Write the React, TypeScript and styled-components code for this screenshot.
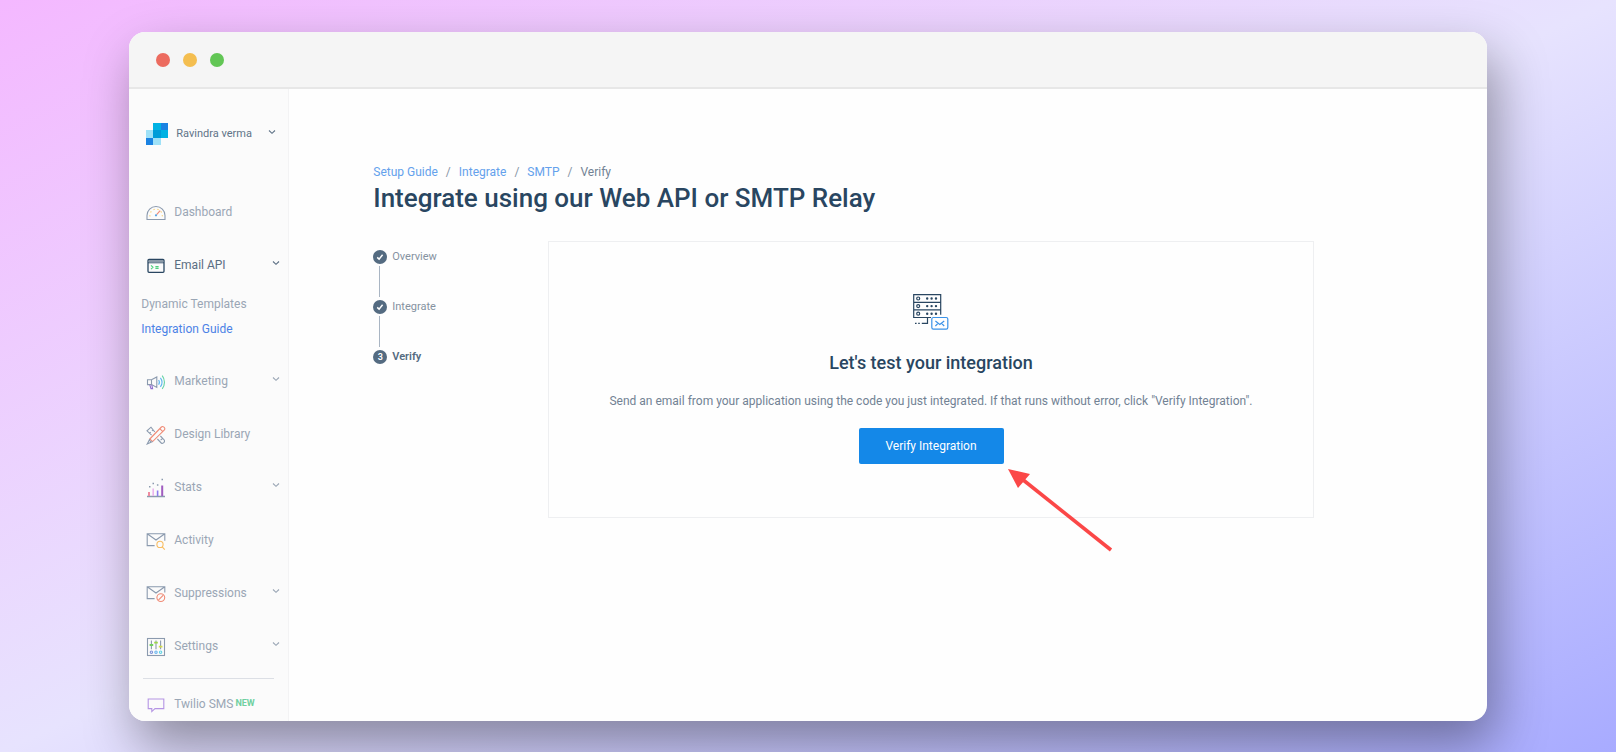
import React from 'react';
import styled, { createGlobalStyle } from 'styled-components';

const GlobalStyle = createGlobalStyle`
  *, *::before, *::after { box-sizing: border-box; }
  body {
    margin: 0;
    font-family: Roboto, "Liberation Sans", sans-serif;
    font-size: 12px;
    line-height: 16px;
    color: #546b81;
  }
  a { text-decoration: none; }
  button { font: inherit; cursor: pointer; }
`;

const Backdrop = styled.div`
  min-height: 100vh;
  padding: 32px 8% 31px;
  background: linear-gradient(to bottom right, #f4b8ff 0%, #e7e3fe 50%, #a8abff 100%);
`;

const BrowserWindow = styled.div`
  display: flex;
  flex-direction: column;
  height: calc(100vh - 63px);
  border-radius: 16px;
  overflow: hidden;
  background: #fefefe;
  box-shadow: 8px 24px 52px rgba(0, 0, 0, 0.38);
`;

const TitleBar = styled.div`
  flex: none;
  display: flex;
  align-items: center;
  gap: 13px;
  height: 57px;
  padding: 0 27px;
  background: #f5f5f5;
  border-bottom: 2px solid #e7e7e7;
`;

const Light = styled.span<{ $color: string }>`
  width: 14px;
  height: 14px;
  border-radius: 50%;
  background: ${(p) => p.$color};
`;

const Body = styled.div`
  flex: 1;
  display: flex;
  min-height: 0;
`;

const Sidebar = styled.aside`
  flex: none;
  width: 160px;
  overflow: hidden;
  background: #fbfbfb;
  border-right: 1px solid #f3f3f4;
`;

const Account = styled.button`
  display: flex;
  align-items: center;
  width: 100%;
  height: 96px;
  padding: 0 12px 6px 17px;
  border: 0;
  background: none;
  color: #607488;
  font-size: 11px;
  text-align: left;
`;

const AccountName = styled.span`
  flex: 1;
  padding-left: 8px;
`;

const NavItem = styled.a<{ $active?: boolean }>`
  display: flex;
  align-items: center;
  width: 100%;
  height: 53px;
  padding: 0 8px 0 17px;
  border: 0;
  background: none;
  color: ${(p) => (p.$active ? '#5a6e82' : '#9aa6b5')};
  text-align: left;
`;

const NavLabel = styled.span`
  flex: 1;
  padding-left: 8px;
`;

const NavIcon = styled.svg`
  flex: none;
  width: 20px;
  height: 20px;
  margin-top: 2px;
  fill: none;
  stroke: #8b9aae;
  stroke-width: 1.1;
`;

const ChevronIcon = styled.svg`
  flex: none;
  width: 8px;
  height: 8px;
  margin-bottom: 4px;
  fill: none;
  stroke: currentColor;
  stroke-width: 1.1;
`;

const SubNav = styled.div`
  display: flex;
  flex-direction: column;
  padding: 1px 0 12px 12px;
`;

const SubLink = styled.a<{ $active?: boolean }>`
  line-height: 25px;
  color: ${(p) => (p.$active ? '#4c82e6' : '#9aa6b5')};
`;

const Divider = styled.hr`
  margin: 6px 14px 0;
  border: 0;
  border-top: 1px solid #dcdfe5;
`;

const ProductLinks = styled.div`
  display: flex;
  flex-direction: column;
  margin-top: -2px;
`;

const NewTag = styled.span`
  padding-left: 2px;
  font-size: 9px;
  font-weight: 700;
  line-height: 12px;
  vertical-align: 2px;
  color: #6fd0a0;
`;

const Main = styled.main`
  flex: 1;
  min-width: 0;
  padding: 75px 173px 0 84px;
`;

const Breadcrumb = styled.nav`
  display: flex;
  gap: 8px;
  color: #8795a5;
`;

const Crumb = styled.a`
  color: #64a1ec;
`;

const Current = styled.span`
  color: #728294;
`;

const Title = styled.h1`
  margin: 0;
  font-size: 26px;
  line-height: 36px;
  font-weight: 500;
  color: #294661;
`;

const Columns = styled.div`
  display: flex;
  align-items: flex-start;
  margin-top: 25px;
`;

const Steps = styled.ol`
  flex: none;
  width: 175px;
  margin: 0;
  padding: 8px 0 0;
  list-style: none;
`;

const Step = styled.li<{ $current?: boolean }>`
  display: flex;
  align-items: center;
  gap: 5px;
  font-size: 11px;
  line-height: 16px;
  font-weight: ${(p) => (p.$current ? 600 : 400)};
  color: ${(p) => (p.$current ? '#546b81' : '#8592a1')};

  &:not(:last-child) {
    flex-wrap: wrap;
  }
  &:not(:last-child)::after {
    content: '';
    flex: 0 0 1px;
    height: 31px;
    margin: -4px 150px 2px 6px;
    background: #a9b5c3;
  }
`;

const StepMark = styled.span`
  display: flex;
  align-items: center;
  justify-content: center;
  width: 14px;
  height: 14px;
  border-radius: 50%;
  background: #546b81;
  color: #ffffff;
  font-size: 9px;
  line-height: 14px;
`;

const Card = styled.section`
  flex: 1;
  display: flex;
  flex-direction: column;
  align-items: center;
  padding: 52px 40px 53px;
  border: 1px solid #eeeff1;
`;

const CardTitle = styled.h2`
  margin: 21px 0 0;
  font-size: 18px;
  line-height: 24px;
  font-weight: 500;
  color: #294661;
`;

const CardText = styled.p`
  margin: 18px 0 19px;
  text-align: center;
  color: #728294;
`;

const ButtonWrap = styled.div`
  position: relative;
`;

const PrimaryButton = styled.button`
  width: 145px;
  height: 36px;
  padding: 0;
  border: 0;
  border-radius: 2px;
  background: #1488e8;
  color: #ffffff;
`;

const Arrow = styled.svg`
  position: absolute;
  left: 100%;
  top: 100%;
  width: 110px;
  height: 90px;
`;

const Chevron = () => (
  <ChevronIcon viewBox="0 0 8 8" aria-hidden="true">
    <path d="M1 2.5 4 5.3 7 2.5" />
  </ChevronIcon>
);

const Logo = () => (
  <svg width="22" height="22" viewBox="0 0 21 21" aria-hidden="true" shapeRendering="crispEdges">
    <path fill="#9fe1f7" d="M0 7h7v7H0zM7 14h7v7H7z" />
    <path fill="#1a82e2" d="M0 14h7v7H0zM14 0h7v7h-7z" />
    <path fill="#00b2e3" d="M7 0h7v7H7zM14 7h7v7h-7z" />
    <path fill="#009dd9" d="M7 7h7v7H7z" />
  </svg>
);

const icons: Record<string, React.ReactNode> = {
  dashboard: (
    <>
      <path d="M1 16.5V12.5a9 9 0 0 1 18 0v4z" />
      <path stroke="#f8d37c" strokeDasharray="1.4 2.6" d="M4 13.5a6.2 6.2 0 1 1 12.2 0" />
      <path stroke="#f08b76" d="M10.6 11.6 14.2 7.6" />
      <circle cx="10" cy="12.3" r=".6" stroke="#5ba8e8" />
    </>
  ),
  email: (
    <>
      <rect x="2" y="3.5" width="16" height="12.8" rx="1" stroke="#294661" strokeWidth="1.3" />
      <path stroke="#294661" strokeWidth=".9" d="M2 6.8h16M3 5.1h14" />
      <path stroke="#4fd07c" d="m5 9.4 2 1.9-2 1.9M9.4 10.6h3.2M9.4 12.4h3.2" />
    </>
  ),
  marketing: (
    <>
      <path d="M1.5 7.8h4L10.8 5v10.4L5.5 12.6h-4zM5.5 7.8v4.8" />
      <path stroke="#8f6fd0" d="M3.8 12.8 5 16.6h1.6l-.8-3.8" />
      <path stroke="#5fb7ef" d="M12.6 8c1 1.4 1 3.4 0 4.8M14.4 5.8c2 2.6 2 6.4 0 9" />
      <path stroke="#63d2a4" d="M16.2 3.6c3 3.8 3 9.4 0 13.2" />
    </>
  ),
  design: (
    <>
      <path d="M8.8 7 5 2.2 1 5.8l4.6 4.4M3.6 8.2l1.2-1M5.9 5.8l1.2-1M11.4 14l4 4.2c2 .6 3.6-1 3-3L14.4 11M14.6 15.2l1.8-1.6" />
      <path stroke="#f08b76" d="m3.8 14 11.6-12c1.4-1.4 4.4 1 3 2.8L6.6 16.6zM13.8 3.7l3 2.9" />
      <path d="M3.8 14 1.2 19l5.4-2.4M3.6 15.4l1.4 1.4" />
    </>
  ),
  stats: (
    <>
      <path strokeWidth="1.5" d="M1 18.5h18" />
      <path stroke="#f08ba0" strokeWidth="2" d="M3 14v4" />
      <path stroke="#ebb4ee" strokeWidth="1.6" d="M7.2 10.5V18" />
      <path stroke="#8d7bf0" strokeWidth="1.6" d="M11.6 12.5V18" />
      <path stroke="#a05cc0" strokeWidth="2" d="M16.2 7.5V18" />
      <path strokeWidth="1.5" d="M3 8.8h1.5M6.5 5.4H8M10.9 7h1.5M15.5 1.6H17" />
    </>
  ),
  activity: (
    <>
      <path d="M8.6 14.6H1.2V2.8h17.6v7M1.2 2.8 10 9l8.8-6.2" />
      <circle cx="14" cy="13.4" r="3.1" stroke="#f8bd62" />
      <path stroke="#f8bd62" d="m16.2 15.8 2.6 2.8" />
    </>
  ),
  suppressions: (
    <>
      <path d="M8.6 14.6H1.2V2.8h17.6v5.6M1.2 2.8 10 9l8.8-6.2" />
      <circle cx="14.8" cy="13.6" r="3.9" stroke="#f08b76" />
      <path stroke="#f08b76" d="m12.4 16.2 4.9-5" />
    </>
  ),
  settings: (
    <>
      <rect x="1.5" y="1.5" width="17" height="17" />
      <path d="M5.4 3.4v8.8M10 3.4v8.8M14.6 3.4v8.8" />
      <path stroke="#71cf5c" strokeWidth="1.8" d="M3.6 8h3.6" />
      <path stroke="#9bd648" strokeWidth="1.8" d="M8.2 5.6h3.6" />
      <path stroke="#d3dc4a" strokeWidth="1.8" d="M12.8 9.6h3.6" />
      <circle cx="5.4" cy="15.2" r="1.2" stroke="#7f93d8" />
      <circle cx="10" cy="15.2" r="1.2" stroke="#68b4ee" />
      <circle cx="14.6" cy="15.2" r="1.2" stroke="#62d3e4" />
    </>
  ),
  sms: <path stroke="#b595e4" d="M2.2 4h15.6v9.6H9l-3.2 3v-3H2.2z" />,
};

interface ItemProps {
  icon: string;
  label: string;
  menu?: boolean;
  active?: boolean;
  tag?: string;
}

const Item = ({ icon, label, menu, active, tag }: ItemProps) => {
  const content = (
    <>
      <NavIcon viewBox="0 0 20 20" aria-hidden="true">{icons[icon]}</NavIcon>
      <NavLabel>
        {label}
        {tag && <NewTag>{tag}</NewTag>}
      </NavLabel>
      {menu && <Chevron />}
    </>
  );
  return menu ? (
    <NavItem as="button" type="button" $active={active}>{content}</NavItem>
  ) : (
    <NavItem href="#">{content}</NavItem>
  );
};

const Check = () => (
  <svg width="8" height="8" viewBox="0 0 8 8" fill="none" stroke="#fff" strokeWidth="1.5" aria-hidden="true">
    <path d="M1.2 4.4 3.1 6.1 6.6 1.8" />
  </svg>
);

const ServerIcon = () => (
  <svg width="38" height="36" viewBox="0 0 38 36" fill="none" stroke="#294661" strokeWidth="1.2" aria-hidden="true">
    <path d="M19 23.5H1.7V.7h27v20M1.7 8.3h27M1.7 15.9h27" />
    <circle cx="6.2" cy="4.5" r="1.5" />
    <circle cx="6.2" cy="12.1" r="1.5" />
    <circle cx="6.2" cy="19.7" r="1.5" />
    <path
      strokeWidth="2.4"
      strokeLinecap="round"
      strokeDasharray="0 4.4"
      d="M15.2 4.5h9M15.2 12.1h9M15.2 19.7h9"
    />
    <path d="M15.5 23.5v5.8H9.8M3 29.3h1.6M6.2 29.3h1.6" />
    <rect x="19.8" y="23.5" width="16" height="11.6" rx="1.6" stroke="#3a92e8" />
    <path stroke="#3a92e8" d="m23.4 27 4.4 3.4 4.4-3.4M23.4 32l2.6-2.6M32.2 32l-2.6-2.6" />
  </svg>
);

export default function App() {
  return (
    <>
      <GlobalStyle />
      <Backdrop>
        <BrowserWindow>
          <TitleBar>
            <Light $color="#ec6b5f" />
            <Light $color="#f4be50" />
            <Light $color="#62c655" />
          </TitleBar>
          <Body>
            <Sidebar>
              <Account type="button">
                <Logo />
                <AccountName>Ravindra verma</AccountName>
                <Chevron />
              </Account>
              <Item icon="dashboard" label="Dashboard" />
              <Item icon="email" label="Email API" menu active />
              <SubNav>
                <SubLink href="#">Dynamic Templates</SubLink>
                <SubLink href="#" $active>Integration Guide</SubLink>
              </SubNav>
              <Item icon="marketing" label="Marketing" menu />
              <Item icon="design" label="Design Library" />
              <Item icon="stats" label="Stats" menu />
              <Item icon="activity" label="Activity" />
              <Item icon="suppressions" label="Suppressions" menu />
              <Item icon="settings" label="Settings" menu />
              <Divider />
              <ProductLinks>
                <Item icon="sms" label="Twilio SMS" tag="NEW" />
              </ProductLinks>
            </Sidebar>
            <Main>
              <Breadcrumb aria-label="Breadcrumb">
                <Crumb href="#">Setup Guide</Crumb>
                <span>/</span>
                <Crumb href="#">Integrate</Crumb>
                <span>/</span>
                <Crumb href="#">SMTP</Crumb>
                <span>/</span>
                <Current>Verify</Current>
              </Breadcrumb>
              <Title>Integrate using our Web API or SMTP Relay</Title>
              <Columns>
                <Steps>
                  <Step><StepMark><Check /></StepMark>Overview</Step>
                  <Step><StepMark><Check /></StepMark>Integrate</Step>
                  <Step $current><StepMark>3</StepMark>Verify</Step>
                </Steps>
                <Card>
                  <ServerIcon />
                  <CardTitle>Let's test your integration</CardTitle>
                  <CardText>
                    Send an email from your application using the code you just integrated. If that runs
                    without error, click "Verify Integration".
                  </CardText>
                  <ButtonWrap>
                    <PrimaryButton type="button">Verify Integration</PrimaryButton>
                    <Arrow viewBox="0 0 110 90" aria-hidden="true">
                      <path d="M4 5 26 10 14 24z" fill="#fb4747" />
                      <path d="M18 15 107 86" stroke="#fb4747" strokeWidth="3.6" />
                    </Arrow>
                  </ButtonWrap>
                </Card>
              </Columns>
            </Main>
          </Body>
        </BrowserWindow>
      </Backdrop>
    </>
  );
}
